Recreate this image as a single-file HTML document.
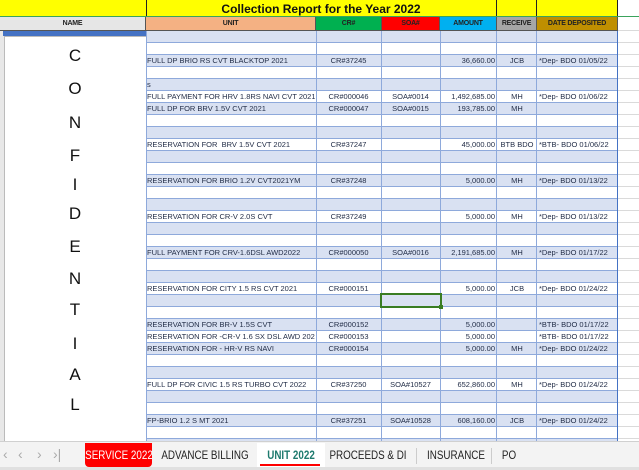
<!DOCTYPE html>
<html><head><meta charset="utf-8"><style>
*{margin:0;padding:0;box-sizing:border-box}
body{width:639px;height:470px;overflow:hidden;background:#fff;position:relative;font-family:"Liberation Sans",sans-serif}
.a{position:absolute}
.r{position:absolute;left:146px;width:472px;height:12px;border-bottom:1px solid #8ea9db;font-size:7.5px;color:#1f2a44;line-height:11px;white-space:nowrap}
.b{background:#d9e1f2}
.r span{position:absolute;top:0;overflow:hidden}
.u{left:1px;width:168px}
.c{left:170px;width:65px;text-align:center}
.s{left:235px;width:59px;text-align:center}
.m{left:294px;width:55px;text-align:right}
.v{left:351px;width:40px;text-align:center}
.d{left:393px;width:78px}
.v1{position:absolute;top:31px;height:410px;width:1px;background:#8ea9db}
.h{position:absolute;top:17px;height:14px;font-size:7px;font-weight:bold;text-align:center;line-height:14px;border-right:1px solid #555;border-bottom:1px solid #555;letter-spacing:-0.2px;color:#222}
.L{position:absolute;left:60px;width:30px;text-align:center;font-size:17px;color:#111}
.tab{position:absolute;top:443px;height:24px;line-height:24px;font-size:12px;color:#222;white-space:nowrap;overflow:hidden}
.tab i{font-style:normal;position:absolute;top:0;left:50%;transform:translateX(-50%) scaleX(.82)}
.ar{position:absolute;top:446px;font-size:14px;color:#aaa}
</style></head><body>
<div class="a" style="left:618px;top:31px;width:21px;height:410px;background:repeating-linear-gradient(to bottom,#fff 0,#fff 11px,#dadada 11px,#dadada 12px)"></div>
<div class="a" style="left:618px;top:0;width:21px;height:31px;background:#fff;border-bottom:1px solid #dadada"></div>
<div class="a" style="left:0;top:0;width:618px;height:17px;background:#ffff00;border-bottom:1px solid #222;border-right:1px solid #222"></div>
<div class="a" style="left:146px;top:0;width:1px;height:17px;background:#222"></div>
<div class="a" style="left:496px;top:0;width:1px;height:17px;background:#222"></div>
<div class="a" style="left:536px;top:0;width:1px;height:17px;background:#222"></div>
<div class="a" style="left:146px;top:2px;width:350px;text-align:center;font-weight:bold;font-size:12px;color:#111">Collection Report for the Year 2022</div>
<div class="a" style="left:0;top:16px;width:639px;height:1px;background:#3aa35c"></div>
<div class="h" style="left:0;width:146px;background:#e6e6e6">NAME</div>
<div class="h" style="left:146px;width:170px;background:#f4b183">UNIT</div>
<div class="h" style="left:316px;width:66px;background:#00b050">CR#</div>
<div class="h" style="left:382px;width:58px;background:#ff0000">SOA#</div>
<div class="h" style="left:440px;width:57px;background:#00b0f0">AMOUNT</div>
<div class="h" style="left:497px;width:40px;background:#a6a6a6">RECEIVE</div>
<div class="h" style="left:537px;width:81px;background:#bf8f00">DATE DEPOSITED</div>
<div class="a" style="left:0;top:31px;width:146px;height:410px;background:#e8e8e8"></div>
<div class="a" style="left:3px;top:31px;width:143px;height:5px;background:#4472c4"></div>
<div class="a" style="left:4px;top:36px;width:142px;height:405px;background:#fff;border-left:1px solid #bbb;border-top:1px solid #bbb"></div>
<div class="L" style="top:46px">C</div>
<div class="L" style="top:79px">O</div>
<div class="L" style="top:113px">N</div>
<div class="L" style="top:146px">F</div>
<div class="L" style="top:175px">I</div>
<div class="L" style="top:204px">D</div>
<div class="L" style="top:237px">E</div>
<div class="L" style="top:269px">N</div>
<div class="L" style="top:300px">T</div>
<div class="L" style="top:334px">I</div>
<div class="L" style="top:365px">A</div>
<div class="L" style="top:395px">L</div>
<div class="r b" style="top:31px"></div>
<div class="r" style="top:43px"></div>
<div class="r b" style="top:55px"><span class="u">FULL DP BRIO RS CVT BLACKTOP 2021</span><span class="c">CR#37245</span><span class="m">36,660.00</span><span class="v">JCB</span><span class="d">*Dep- BDO 01/05/22</span></div>
<div class="r" style="top:67px"></div>
<div class="r b" style="top:79px"><span class="u">s</span></div>
<div class="r" style="top:91px"><span class="u">FULL PAYMENT FOR HRV 1.8RS NAVI CVT 2021</span><span class="c">CR#000046</span><span class="s">SOA#0014</span><span class="m">1,492,685.00</span><span class="v">MH</span><span class="d">*Dep- BDO 01/06/22</span></div>
<div class="r b" style="top:103px"><span class="u">FULL DP FOR BRV 1.5V CVT 2021</span><span class="c">CR#000047</span><span class="s">SOA#0015</span><span class="m">193,785.00</span><span class="v">MH</span></div>
<div class="r" style="top:115px"></div>
<div class="r b" style="top:127px"></div>
<div class="r" style="top:139px"><span class="u">RESERVATION FOR &nbsp;BRV 1.5V CVT 2021</span><span class="c">CR#37247</span><span class="m">45,000.00</span><span class="v">BTB BDO</span><span class="d">*BTB- BDO 01/06/22</span></div>
<div class="r b" style="top:151px"></div>
<div class="r" style="top:163px"></div>
<div class="r b" style="top:175px"><span class="u">RESERVATION FOR BRIO 1.2V CVT2021YM</span><span class="c">CR#37248</span><span class="m">5,000.00</span><span class="v">MH</span><span class="d">*Dep- BDO 01/13/22</span></div>
<div class="r" style="top:187px"></div>
<div class="r b" style="top:199px"></div>
<div class="r" style="top:211px"><span class="u">RESERVATION FOR CR-V 2.0S CVT</span><span class="c">CR#37249</span><span class="m">5,000.00</span><span class="v">MH</span><span class="d">*Dep- BDO 01/13/22</span></div>
<div class="r b" style="top:223px"></div>
<div class="r" style="top:235px"></div>
<div class="r b" style="top:247px"><span class="u">FULL PAYMENT FOR CRV-1.6DSL AWD2022</span><span class="c">CR#000050</span><span class="s">SOA#0016</span><span class="m">2,191,685.00</span><span class="v">MH</span><span class="d">*Dep- BDO 01/17/22</span></div>
<div class="r" style="top:259px"></div>
<div class="r b" style="top:271px"></div>
<div class="r" style="top:283px"><span class="u">RESERVATION FOR CITY 1.5 RS CVT 2021</span><span class="c">CR#000151</span><span class="m">5,000.00</span><span class="v">JCB</span><span class="d">*Dep- BDO 01/24/22</span></div>
<div class="r b" style="top:295px"></div>
<div class="r" style="top:307px"></div>
<div class="r b" style="top:319px"><span class="u">RESERVATION FOR BR-V 1.5S CVT</span><span class="c">CR#000152</span><span class="m">5,000.00</span><span class="d">*BTB- BDO 01/17/22</span></div>
<div class="r" style="top:331px"><span class="u">RESERVATION FOR -CR-V 1.6 SX DSL AWD 2022</span><span class="c">CR#000153</span><span class="m">5,000.00</span><span class="d">*BTB- BDO 01/17/22</span></div>
<div class="r b" style="top:343px"><span class="u">RESERVATION FOR - HR-V RS NAVI</span><span class="c">CR#000154</span><span class="m">5,000.00</span><span class="v">MH</span><span class="d">*Dep- BDO 01/24/22</span></div>
<div class="r" style="top:355px"></div>
<div class="r b" style="top:367px"></div>
<div class="r" style="top:379px"><span class="u">FULL DP FOR CIVIC 1.5 RS TURBO CVT 2022</span><span class="c">CR#37250</span><span class="s">SOA#10527</span><span class="m">652,860.00</span><span class="v">MH</span><span class="d">*Dep- BDO 01/24/22</span></div>
<div class="r b" style="top:391px"></div>
<div class="r" style="top:403px"></div>
<div class="r b" style="top:415px"><span class="u">FP-BRIO 1.2 S MT 2021</span><span class="c">CR#37251</span><span class="s">SOA#10528</span><span class="m">608,160.00</span><span class="v">JCB</span><span class="d">*Dep- BDO 01/24/22</span></div>
<div class="r" style="top:427px"></div>
<div class="r b" style="top:439px"></div>
<div class="v1" style="left:146px"></div>
<div class="v1" style="left:316px"></div>
<div class="v1" style="left:381px"></div>
<div class="v1" style="left:440px"></div>
<div class="v1" style="left:496px"></div>
<div class="v1" style="left:536px"></div>
<div class="v1" style="left:617px;background:#4472c4"></div>
<div class="a" style="left:380px;top:293px;width:62px;height:15px;border:2px solid #3a7d22"></div>
<div class="a" style="left:439px;top:305px;width:4px;height:4px;background:#3a7d22"></div>
<div class="a" style="left:0;top:441px;width:639px;height:29px;background:#f3f3f3;border-top:1px solid #d0d0d0"></div>
<div class="a" style="left:0;top:467px;width:639px;height:3px;background:#e0e0e0"></div>
<div class="ar" style="left:3px">‹</div>
<div class="ar" style="left:18px">‹</div>
<div class="ar" style="left:37px">›</div>
<div class="ar" style="left:53px">›|</div>
<div class="tab" style="left:85px;width:67px;background:#ff0000;color:#fff;border-radius:0 0 4px 4px"><i>SERVICE 2022</i></div>
<div class="tab" style="left:158px;width:94px"><i>ADVANCE BILLING</i></div>
<div class="tab" style="left:257px;width:68px;background:#fff;color:#1e7a6e;font-weight:bold"><i>UNIT 2022</i></div>
<div class="a" style="left:260px;top:464px;width:60px;height:2px;background:#ff0000"></div>
<div class="tab" style="left:330px;width:76px"><i>PROCEEDS &amp; DI</i></div>
<div class="a" style="left:416px;top:448px;width:1px;height:16px;background:#ccc"></div>
<div class="tab" style="left:421px;width:70px"><i>INSURANCE</i></div>
<div class="a" style="left:491px;top:448px;width:1px;height:16px;background:#ccc"></div>
<div class="tab" style="left:494px;width:30px"><i>PO</i></div>
</body></html>
